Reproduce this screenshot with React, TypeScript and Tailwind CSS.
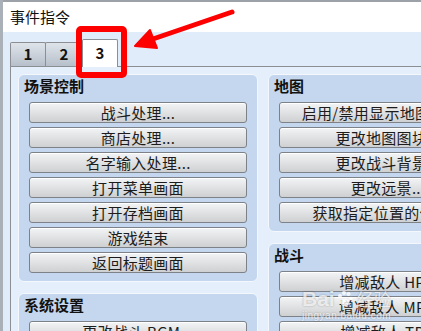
const font = "font-['Noto_Sans_CJK_SC','Noto_Sans',sans-serif]";

type Group = { title: string; items: string[] };

const leftGroups: Group[] = [
  {
    title: '场景控制',
    items: ['战斗处理...', '商店处理...', '名字输入处理...', '打开菜单画面', '打开存档画面', '游戏结束', '返回标题画面'],
  },
  { title: '系统设置', items: ['更改战斗 BGM...', '更改胜利 ME...'] },
];

const rightGroups: Group[] = [
  {
    title: '地图',
    items: ['启用/禁用显示地图名称...', '更改地图图块...', '更改战斗背景...', '更改远景...', '获取指定位置的信息...'],
  },
  { title: '战斗', items: ['增减敌人 HP...', '增减敌人 MP...', '增减敌人 TP...'] },
];

function GroupBox({ group }: { group: Group }) {
  return (
    <div className="rounded-[6px] border border-[#f4f8fd] bg-[#c4d7ee] pb-[8px]">
      <div className="h-[22px] pl-[5px] flex items-center text-[15px] leading-[18px] font-bold text-[#111]">
        {group.title}
      </div>
      <div className="mt-[5px] px-[10px] flex flex-col gap-[4px]">
        {group.items.map((item) => (
          <div
            key={item}
            className="h-[21px] w-[218px] flex items-center justify-center whitespace-nowrap rounded-[3px] border border-[#7d8288] bg-gradient-to-b from-[#f3f4f5] to-[#cfd0d2] text-[15px] leading-[18px] tracking-[0.3px] text-[#1c1c1c] shadow-[inset_0_1px_0_#ffffff]"
          >
            {item}
          </div>
        ))}
      </div>
    </div>
  );
}

const tabBase =
  'border border-b-0 border-[#8b8e92] rounded-t-[2px] flex items-center justify-center text-[15px] font-semibold text-[#111]';

export default function App() {
  return (
    <div className={`relative w-[421px] h-[331px] overflow-hidden bg-[#e1ecfb] border-l-[3px] border-[#aab0b8] flex flex-col ${font}`}>
      <div className="h-[2px] bg-[#9da2a8] shrink-0" />
      <div className="h-[30px] bg-white shrink-0 pl-[7px] flex items-center text-[15px] leading-[18px] text-[#111]">
        事件指令
      </div>

      {/* tabs */}
      <div className="h-[34px] shrink-0 pl-[7px] flex items-end relative z-10">
        <div className={`w-[36px] h-[24px] bg-gradient-to-b from-[#dfe4ea] to-[#b7c0ca] ${tabBase}`}>1</div>
        <div className={`-ml-[1px] w-[38px] h-[24px] bg-gradient-to-b from-[#dfe4ea] to-[#b7c0ca] ${tabBase}`}>2</div>
        <div className={`-ml-[1px] w-[36px] h-[28px] -mb-[1px] bg-white ${tabBase}`}>3</div>
      </div>

      {/* tab content */}
      <div className="flex-1 ml-[7px] border-l border-t border-[#8b8e92] bg-[#e5effc] pt-[7px] pl-[7px] flex gap-[10px]">
        <div className="w-[240px] shrink-0 flex flex-col gap-[11px]">
          {leftGroups.map((g) => (
            <GroupBox key={g.title} group={g} />
          ))}
        </div>
        <div className="w-[240px] shrink-0 flex flex-col gap-[11px]">
          {rightGroups.map((g) => (
            <GroupBox key={g.title} group={g} />
          ))}
        </div>
      </div>

      {/* annotation: red box and arrow */}
      <div className="absolute left-[73px] top-[26px] w-[51px] h-[52px] border-[6px] border-[#ff0000] rounded-[5px] z-20" />
      <svg className="absolute left-[-3px] top-0 z-20 pointer-events-none" width="421" height="331">
        <line x1="232" y1="12" x2="150" y2="40" stroke="#ff0000" strokeWidth="5" strokeLinecap="round" />
        <polygon points="135,46 150,30 157,48" fill="#ff0000" stroke="#ff0000" strokeWidth="2" strokeLinejoin="round" />
      </svg>

      {/* watermark */}
      <div className="absolute left-[299px] top-[288px] z-20 text-white/75 [text-shadow:0_0_2px_rgba(0,0,0,0.3)] pointer-events-none">
        <div className="flex items-end">
          <span className="font-['Liberation_Sans',sans-serif] text-[21px] leading-[21px] font-bold">Bai</span>
          <svg width="18" height="18" viewBox="0 0 18 18" className="mx-[1px] mb-[1px] opacity-80">
            <circle cx="4" cy="6" r="2" fill="white" />
            <circle cx="8" cy="3" r="2" fill="white" />
            <circle cx="12.5" cy="4" r="2" fill="white" />
            <circle cx="15" cy="8.5" r="1.8" fill="white" />
            <ellipse cx="9" cy="12.5" rx="4.5" ry="3.8" fill="white" />
          </svg>
          <span className="text-[17px] leading-[20px] ml-[2px]">经验</span>
        </div>
        <div className="font-['Liberation_Sans',sans-serif] text-[10px] leading-[12px] mt-[1px] tracking-[0.5px]">jingyan.baidu.com</div>
      </div>
    </div>
  );
}
